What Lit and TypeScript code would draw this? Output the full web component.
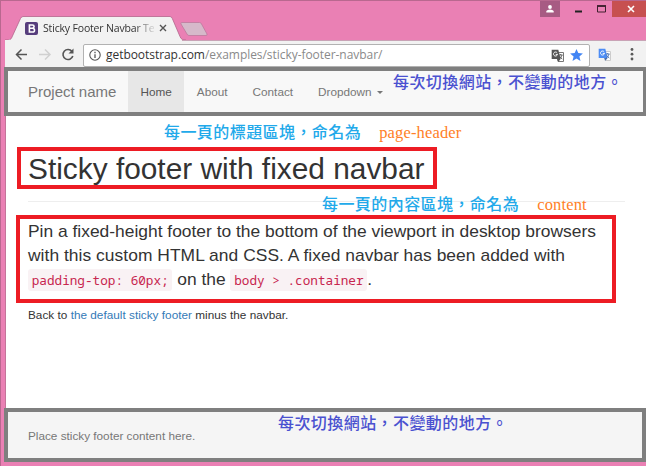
import { LitElement, html, css, svg } from "lit";
import { customElement } from "lit/decorators.js";

const translateGlyph = (front: string, back: string, ink: string) => svg`
  <path d="M5 3.5h7.5v9H7z" fill="#fff" stroke=${back} stroke-width="1" />
  <path d="M.7.7h6.6l2.3 9.3H.7z" fill=${front} />
  <path d="M6.2 3.9a2 2 0 1 0 .3 1.5H4.7" fill="none" stroke="#fff" stroke-width="1" />
  <path d="M7.6 6h4M9.7 5v1M11 6c-.4 2-1.5 3.3-2.8 4M8.7 7.2c.6 1.4 1.6 2.2 2.6 2.8" fill="none" stroke=${ink} stroke-width=".9" />
  <path d="M6.2 10h3.4L7.4 12.7z" fill=${ink} />`;

@customElement("browser-chrome")
class BrowserChrome extends LitElement {
  static styles = css`
    :host { display: block; font-family: "Open Sans", "Noto Sans", sans-serif; }
    svg { display: block; flex: none; }
    .titlebar { height: 40px; box-sizing: border-box; border-top: 1px solid #b9688f; background: #ea80b4; display: flex; justify-content: space-between; align-items: flex-start; }
    .tabs { position: relative; width: 204px; height: 24px; margin: 15px 0 0 5px; }
    .shape { position: absolute; left: 0; top: 0; }
    .tab { position: relative; display: flex; align-items: center; height: 24px; padding-left: 20px; }
    .title { margin-left: 5px; width: 111px; white-space: nowrap; font-size: 10.5px; letter-spacing: -0.17px; line-height: 22px; color: #333; -webkit-mask-image: linear-gradient(90deg, #000 92px, transparent 114px); }
    .close { margin-left: 5px; }
    .controls { display: flex; height: 17px; }
    .user { width: 20px; height: 16px; background: #a75b83; display: flex; justify-content: center; align-items: center; }
    .controls .plain { width: 52px; }
    .controls .quit { width: 34px; height: 16px; background: #c75050; display: flex; align-items: center; justify-content: center; box-sizing: border-box; padding-left: 4px; }
    .toolbar { margin-left: 5px; height: 27px; display: flex; align-items: center; background: #f2f2f2; box-sizing: border-box; border-top: 1px solid; border-image: linear-gradient(90deg, #f2f2f2 177px, #c9a3b6 177px) 1; }
    .nav { margin-left: 9px; }
    .address { margin-left: 8px; width: 507px; height: 23px; margin-top: 2px; box-sizing: border-box; border: 1px solid #b2b2b2; border-radius: 2px; background: #fff; display: flex; align-items: center; padding: 0 6px 0 5px; }
    .url { margin-left: 5px; flex: 1; font-size: 12px; line-height: 20px; letter-spacing: -0.05px; color: #8a8a8a; white-space: nowrap; }
    .host { color: #333; }
    .star { margin-left: 6px; }
    .ext { margin-left: 8px; }
    .more { margin-left: 18px; }
  `;
  render() {
    return html`
      <div class="titlebar">
        <div class="tabs">
          <svg class="shape" width="204" height="24" viewBox="0 0 204 24">
            <path d="M0 24c4 0 6 0 7-3L15.5 2.5Q16.5.5 18 .5H165q1.500 0 2.300 2L175 20.500c1 3 3 3.500 6 3.500z" fill="#f2f2f2" />
            <path d="M0 24c4 0 6 0 7-3L15.5 2.5Q16.5.5 18 .5H165q1.500 0 2.300 2L175 20.500c1 3 3 3.500 6 3.500" fill="none" stroke="#b3668c" stroke-width=".8" />
            <path d="M176.5 6.5h18q1.500 0 2 1.500l5.500 10q.5 1.500-1 1.500h-17q-1.500 0-2-1.500l-6-10q-.5-1.500.5-1.500z" fill="#d6b9ca" stroke="#bd7a9d" stroke-width=".8" />
          </svg>
          <div class="tab">
            <svg width="13" height="13" viewBox="0 0 13 13">
              <rect width="13" height="13" rx="2" fill="#563d7c" />
              <path d="M4.4 3h3q1.700 0 1.700 1.600 0 1.500-1.700 1.700 2.100 0 2.100 1.900T7.600 10H4.400zM4.400 6.300h3" fill="none" stroke="#fff" stroke-width="1.600" />
            </svg>
            <span class="title">Sticky Footer Navbar Te</span>
            <svg class="close" width="8" height="8" viewBox="0 0 8 8"><path d="M1 1l6 6M7 1L1 7" stroke="#555" stroke-width="1.400" /></svg>
          </div>
        </div>
        <div class="controls">
          <div class="user">
            <svg width="8" height="8" viewBox="0 0 8 8"><circle cx="4" cy="2" r="1.900" fill="#fff" /><path d="M.3 7.500V6q1-1.500 3.700-1.500T7.700 6v1.500z" fill="#fff" /></svg>
          </div>
          <svg class="plain" width="52" height="17" viewBox="0 0 52 17"><path d="M15 10.500h7" stroke="#222" stroke-width="2" /><path d="M37.500 5h8v6h-8z" fill="none" stroke="#40202f" /><path d="M37 5h9" stroke="#40202f" stroke-width="1.800" /></svg>
          <div class="quit"><svg width="8" height="8" viewBox="0 0 8 8"><path d="M1 1l6 6M7 1L1 7" stroke="#fff" stroke-width="1.600" /></svg></div>
        </div>
      </div>
      <div class="toolbar">
        <svg class="nav" width="61" height="16" viewBox="0 0 61 16">
          <path d="M13 8.500H2.500M7.500 3.500l-5 5 5 5" fill="none" stroke="#555" stroke-width="1.500" />
          <path d="M25 8.500h10.500M31 3.500l5 5-5 5" fill="none" stroke="#d0d0d0" stroke-width="1.500" />
          <path d="M58 5.500A5 5 0 1 0 58.800 10" fill="none" stroke="#555" stroke-width="1.600" />
          <path d="M59.500 2.500v5h-5z" fill="#555" />
        </svg>
        <div class="address">
          <svg width="12" height="12" viewBox="0 0 12 12"><circle cx="6" cy="6" r="5.200" fill="none" stroke="#555" stroke-width="1.100" /><path d="M6 5.200v3.800M6 2.800v1.400" stroke="#555" stroke-width="1.300" /></svg>
          <span class="url"><span class="host">getbootstrap.com</span>/examples/sticky-footer-navbar/</span>
          <svg width="13" height="13" viewBox="0 0 13 13">${translateGlyph("#555", "#777", "#555")}</svg>
          <svg class="star" width="13" height="12" viewBox="0 0 13 12"><path d="M6.500 0l1.800 4.100 4.600.4-3.500 3 1.100 4.400-4-2.400-4 2.400 1.100-4.400-3.500-3 4.600-.4z" fill="#4285f4" /></svg>
        </div>
        <svg class="ext" width="13" height="13" viewBox="0 0 13 13">${translateGlyph("#4d8df5", "#ccc", "#4a6fae")}</svg>
        <svg class="more" width="6" height="14" viewBox="0 0 6 14"><g fill="#5a5a5a"><circle cx="3" cy="2.500" r="1.400" /><circle cx="3" cy="7.200" r="1.400" /><circle cx="3" cy="12" r="1.400" /></g></svg>
      </div>`;
  }
}

@customElement("side-note")
class SideNote extends LitElement {
  static styles = css`
    :host { display: block; position: absolute; white-space: nowrap; font: 500 16px/20px "Noto Sans CJK TC", sans-serif; letter-spacing: 0.43px; color: #22a9ea; }
    ::slotted(b) { font: 400 16.5px/20px "Liberation Serif", serif; letter-spacing: 0.15px; color: #ff7f27; margin-left: 18px; }
  `;
  render() {
    return html`<slot></slot>`;
  }
}

@customElement("app-root")
class AppRoot extends LitElement {
  static styles = css`
    :host { display: block; position: relative; width: 646px; height: 466px; overflow: hidden; background: #ea80b4; font: 11.75px/16px "Liberation Sans", Arial, sans-serif; color: #333; }
    .window { height: 466px; box-sizing: border-box; display: flex; flex-direction: column; }
    .navbar { margin-left: 4px; height: 49px; flex: none; box-sizing: border-box; border: 4px solid #7f7f7f; border-right-width: 3px; background: #f8f8f8; display: flex; color: #777; line-height: 41px; white-space: nowrap; }
    .brand { padding-left: 20px; width: 100px; font-size: 15px; }
    .item { padding: 0 12.5px; }
    .active { background: #e7e7e7; color: #555; }
    .caret { display: inline-block; margin-left: 5.5px; vertical-align: middle; border: 3.3px solid transparent; border-top-color: #777; border-bottom: 0; }
    .page { margin-left: 5px; flex: 1; background: #fff; border-left: 1px solid #c4749a; box-sizing: border-box; }
    .header { height: 85px; border-bottom: 1px solid #eee; margin: 0 21px 0 22px; display: flex; }
    h1 { margin: 31px 0 0 -11px; width: 420px; height: 42px; box-sizing: border-box; border: 4px solid #ed1c24; padding-left: 7px; font-size: 29.85px; font-weight: 400; line-height: 36px; white-space: nowrap; }
    .lead { margin: 13px 0 0 10px; width: 600px; height: 88px; box-sizing: border-box; border: 4px solid #ed1c24; padding: 0 8px; font-size: 17.42px; line-height: 24px; white-space: nowrap; }
    .wide { letter-spacing: 0.04px; }
    code { font: 12.7px "Noto Sans Mono", "DejaVu Sans Mono", monospace; background: #f9f2f4; color: #c7254e; border-radius: 3px; padding: 2px 3.7px; }
    .back { margin: 4px 0 0 22px; letter-spacing: 0.02px; }
    a { color: #337ab7; text-decoration: none; }
    .footer { margin: 0 0 4px 4px; height: 54px; flex: none; box-sizing: border-box; border: 4px solid #7f7f7f; background: #f5f5f5; color: #777; padding-left: 20px; line-height: 48px; }
    .edge { position: absolute; left: 0; top: 0; width: 1px; height: 466px; background: #b9688f; }
    .blue { color: #4a51d0; }
    .n1 { left: 393px; top: 71px; }
    .n2 { left: 164px; top: 121px; }
    .n3 { left: 322px; top: 193px; }
    .n4 { left: 278px; top: 412px; }
  `;
  render() {
    return html`
      <div class="window">
        <browser-chrome></browser-chrome>
        <nav class="navbar">
          <span class="brand">Project name</span>
          <span class="item active">Home</span><span class="item">About</span><span class="item">Contact</span>
          <span class="item">Dropdown<i class="caret"></i></span>
        </nav>
        <main class="page">
          <div class="header"><h1>Sticky footer with fixed navbar</h1></div>
          <div class="lead">Pin a fixed-height footer to the bottom of the viewport in desktop browsers<br /><span class="wide">with this custom HTML and CSS. A fixed navbar has been added with</span><br /><code>padding-top: 60px;</code> on the <code>body &gt; .container</code>.</div>
          <div class="back">Back to <a>the default sticky footer</a> minus the navbar.</div>
        </main>
        <footer class="footer">Place sticky footer content here.</footer>
      </div>
      <div class="edge"></div>
      <side-note class="blue n1">每次切換網站，不變動的地方。</side-note>
      <side-note class="n2">每一頁的標題區塊，命名為<b>page-header</b></side-note>
      <side-note class="n3">每一頁的內容區塊，命名為<b>content</b></side-note>
      <side-note class="blue n4">每次切換網站，不變動的地方。</side-note>`;
  }
}
